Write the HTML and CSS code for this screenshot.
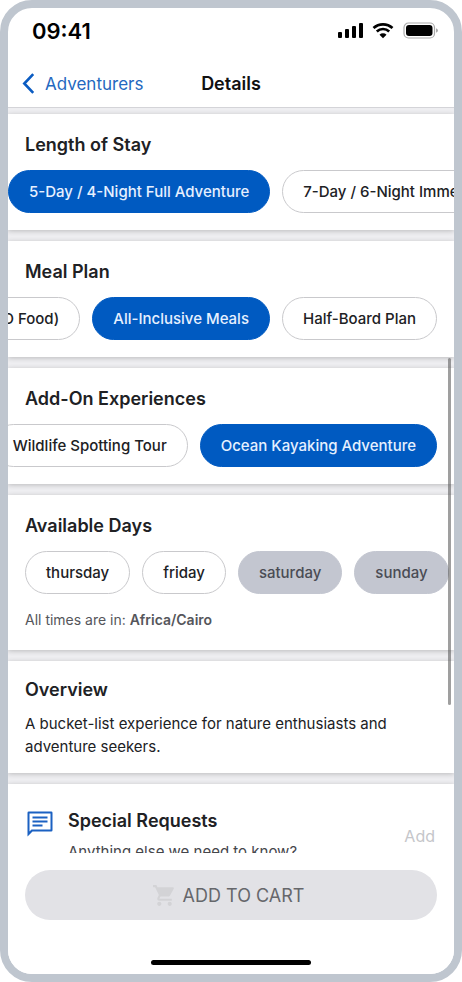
FILE: index.html
```html
<!DOCTYPE html>
<html lang="en">
<head>
<meta charset="utf-8">
<meta name="viewport" content="width=device-width, initial-scale=1">
<title>Details</title>
<link rel="stylesheet" href="styles.css">
</head>
<body>
<div class="phone">
  <div class="status">
    <span class="time">09:41</span>
    <svg class="status-icons" viewBox="0 0 100 18" aria-hidden="true">
      <rect x="0" y="10" width="4" height="6" rx="1"/>
      <rect x="7" y="7" width="4" height="9" rx="1"/>
      <rect x="14" y="4" width="4" height="12" rx="1"/>
      <rect x="21" y="1" width="4" height="15" rx="1"/>
      <path d="M35.500 6A14 14 0 0 1 54.500 6M38.800 9.500A9 9 0 0 1 51.200 9.500" fill="none" stroke="#000" stroke-width="2.700"/>
      <path d="M41.500 12.800a5 5 0 0 1 7 0L45 16.300z"/>
      <rect x="66" y="1" width="30.500" height="15" rx="4.500" fill="none" stroke="#aaa" stroke-width="1.200"/>
      <rect x="68" y="3" width="26.500" height="11" rx="3"/>
      <path d="M98 6.300q2 .700 2 2.200t-2 2.200z" fill="#aaa"/>
    </svg>
  </div>
  <header class="nav">
    <a class="back" href="#">
      <svg class="chevron" viewBox="0 0 12 20" aria-hidden="true"><path d="M10.500 1L2 10l8.500 9"/></svg>
      Adventurers
    </a>
    <h1 class="nav-title">Details</h1>
  </header>
  <main class="content">
    <section class="card">
      <h2 class="heading">Length of Stay</h2>
      <div class="chips chips-edge">
        <button class="chip selected" type="button">5-Day / 4-Night Full Adventure</button>
        <button class="chip" type="button">7-Day / 6-Night Immersion</button>
      </div>
    </section>
    <section class="card">
      <h2 class="heading">Meal Plan</h2>
      <div class="chips chips-end">
        <button class="chip" type="button">(NO Food)</button>
        <button class="chip selected" type="button">All-Inclusive Meals</button>
        <button class="chip" type="button">Half-Board Plan</button>
      </div>
    </section>
    <section class="card">
      <h2 class="heading">Add-On Experiences</h2>
      <div class="chips chips-end">
        <button class="chip" type="button">Wildlife Spotting Tour</button>
        <button class="chip selected" type="button">Ocean Kayaking Adventure</button>
      </div>
    </section>
    <section class="card">
      <h2 class="heading">Available Days</h2>
      <div class="chips">
        <button class="chip" type="button">thursday</button>
        <button class="chip" type="button">friday</button>
        <button class="chip" type="button" disabled>saturday</button>
        <button class="chip" type="button" disabled>sunday</button>
      </div>
      <p class="note">All times are in: <strong>Africa/Cairo</strong></p>
    </section>
    <section class="card about">
      <h2 class="heading">Overview</h2>
      <p class="overview">A bucket-list experience for nature enthusiasts and adventure seekers.</p>
    </section>
    <section class="card requests">
      <svg class="message" viewBox="0 0 24 24" aria-hidden="true"><path d="M3.600 3.600h16.800v12.800H5.200L3.600 18V3.600M3 2Q2 2 2 3v19l4-4h15q1 0 1-1V3q0-1-1-1H3zm3 10.400h8V14H6v-1.600zm0-3.200h12v1.600H6V9.200zm0-3.200h12v1.600H6V6z"/></svg>
      <div class="requests-text">
        <h2 class="requests-title">Special Requests</h2>
        <p class="requests-hint">Anything else we need to know?</p>
      </div>
      <button class="add" type="button" disabled>Add</button>
    </section>
    <div class="scroll-thumb"></div>
  </main>
  <footer class="footer">
    <button class="cart" type="button" disabled>
      <svg class="cart-icon" viewBox="0 0 24 24" aria-hidden="true"><path d="M7 18c-1.100 0-1.990.900-1.990 2S5.900 22 7 22s2-.900 2-2-.900-2-2-2zM1 2v2h2l3.600 7.590-1.350 2.450C4.520 15.370 5.480 17 7 17h12v-2H7.420c-.140 0-.250-.110-.250-.250l.030-.120.900-1.630h7.450c.750 0 1.410-.410 1.750-1.030l3.580-6.490A1 1 0 0 0 20 4H5.210l-.940-2H1zm16 16c-1.100 0-1.990.900-1.990 2s.890 2 1.990 2 2-.900 2-2-.900-2-2-2z"/></svg>
      ADD TO CART
    </button>
    <div class="home"></div>
  </footer>
</div>
</body>
</html>
```
FILE: styles.css
```css
* {
  box-sizing: border-box;
}

body {
  margin: 0;
  background: #fff;
  color: #202124;
  font-family: Inter, "Liberation Sans", sans-serif;
}

h1, h2, p {
  margin: 0;
}

button {
  font-family: inherit;
}

.phone {
  display: flex;
  flex-direction: column;
  height: 100vh;
  border: 8px solid #bfc6cf;
  border-radius: 32px;
  background: #fff;
  overflow: hidden;
}

.status {
  display: flex;
  flex: none;
  align-items: center;
  justify-content: space-between;
  height: 46px;
  padding: 0 16px 0 24px;
}

.time {
  color: #000;
  font-size: 22px;
  font-weight: 600;
}

.status-icons {
  width: 100px;
  height: 18px;
}

.nav {
  display: grid;
  flex: none;
  grid-template-columns: 1fr auto 1fr;
  align-items: center;
  height: 54px;
  padding: 6px 14px 0;
  border-bottom: 1px solid #d4d4d8;
}

.back {
  display: flex;
  align-items: center;
  gap: 10px;
  color: #2468c0;
  font-size: 17px;
  text-decoration: none;
}

.chevron {
  width: 13px;
  height: 21px;
  fill: none;
  stroke: #0b5cc2;
  stroke-width: 2.500;
}

.nav-title {
  color: #111;
  font-size: 18px;
  font-weight: 600;
}

.content {
  position: relative;
  display: flex;
  flex: 1;
  flex-direction: column;
  gap: 11px;
  min-height: 0;
  padding-top: 6px;
  background: #eeeef1;
  overflow: hidden;
}

.card {
  flex: none;
  padding: 19px 17px 17px;
  background: #fff;
  box-shadow: 0 1px 5px rgba(0, 0, 0, 0.22);
}

.heading,
.requests-title {
  font-size: 18px;
  font-weight: 600;
  line-height: 24px;
}

.chips {
  display: flex;
  gap: 12px;
  margin: 13px -17px 0;
  padding: 0 17px;
  overflow: hidden;
}

.chips-edge {
  padding-left: 0;
}

.chips-end {
  justify-content: flex-end;
}

.chip {
  flex: none;
  height: 43px;
  padding: 0 20px;
  border: 1px solid #c9c9cc;
  border-radius: 22px;
  background: #fff;
  color: #202124;
  font-size: 15px;
  font-weight: 500;
}

.chip.selected {
  border-color: #005ac1;
  background: #005ac1;
  color: #e6f0ff;
}

.chip:disabled {
  border-color: #c3c6d0;
  background: #c3c6d0;
  color: #4a4c54;
}

.note {
  margin-top: 16px;
  padding-bottom: 3px;
  color: #55565b;
  font-size: 14px;
  line-height: 20px;
}

.note strong {
  font-weight: 600;
}

.about {
  padding-top: 17px;
  padding-bottom: 15px;
}

.overview {
  margin-top: 10px;
  font-size: 15px;
  line-height: 23px;
}

.requests {
  display: flex;
  align-items: center;
  padding-top: 25px;
  padding-right: 19px;
}

.message {
  align-self: flex-start;
  width: 30px;
  height: 30px;
  fill: #1b61c2;
}

.requests-text {
  flex: 1;
  margin-left: 13px;
}

.requests-hint {
  margin-top: 7px;
  color: #45464b;
  font-size: 15px;
  line-height: 23px;
}

.add {
  padding: 0;
  border: 0;
  background: none;
  color: #c5c6ca;
  font-size: 16px;
}

.scroll-thumb {
  position: absolute;
  top: 250px;
  right: 3px;
  width: 3px;
  height: 347px;
  border-radius: 2px;
  background: rgba(80, 80, 80, 0.55);
}

.footer {
  flex: none;
  padding: 17px 17px 9px;
  background: #fff;
}

.cart {
  display: flex;
  align-items: center;
  justify-content: center;
  gap: 6px;
  width: 100%;
  height: 50px;
  padding: 0 12px 0 6px;
  border: 0;
  border-radius: 25px;
  background: #e2e2e6;
  color: #66676b;
  font-size: 18px;
}

.cart-icon {
  width: 25px;
  height: 25px;
  fill: #d3d3d6;
}

.home {
  width: 160px;
  height: 5px;
  margin: 40px auto 0;
  border-radius: 3px;
  background: #000;
}
```
